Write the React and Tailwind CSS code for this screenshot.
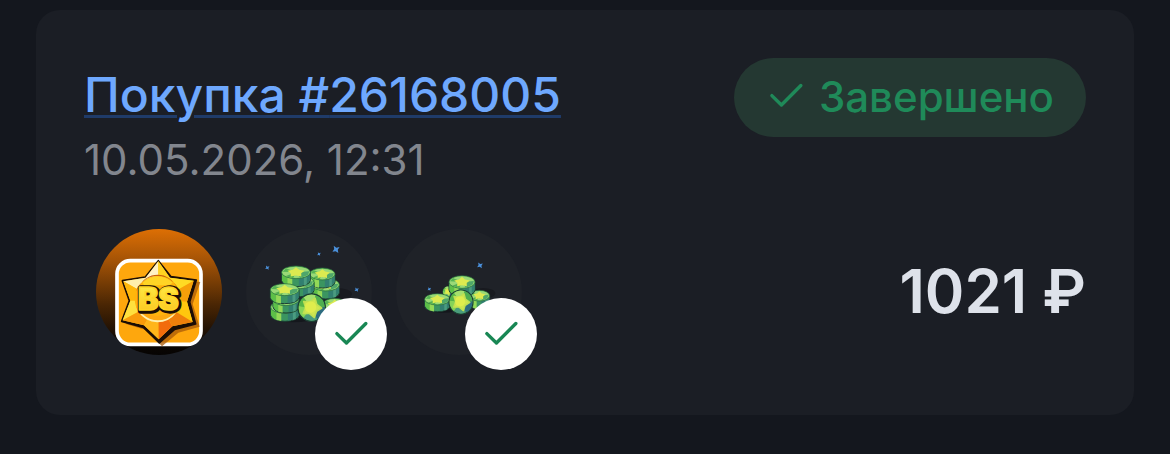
import React from "react";

const order = {
  id: "26168005",
  date: "10.05.2026, 12:31",
  status: "Завершено",
  total: "1021 ₽",
};

const CheckIcon = () => (
  <svg viewBox="0 0 16 16" className="size-[45px]" fill="none" aria-hidden="true">
    <path
      d="M2.8 7.7 6.2 11 13.1 4.1"
      stroke="currentColor"
      strokeWidth="1.2"
      strokeLinecap="round"
      strokeLinejoin="round"
    />
  </svg>
);

const GameLogo = () => (
  <svg viewBox="30 27 378 378" className="size-full" role="img" aria-label="BS">
    <defs>
      <linearGradient id="logoBg" x1="0" y1="0" x2="0" y2="1">
        <stop offset="0" stopColor="#dd6f04" />
        <stop offset="0.25" stopColor="#a45306" />
        <stop offset="0.6" stopColor="#4a2604" />
        <stop offset="0.9" stopColor="#0d0703" />
        <stop offset="1" stopColor="#060403" />
      </linearGradient>
      <linearGradient id="letters" x1="0" y1="0" x2="0" y2="1">
        <stop offset="0" stopColor="#fff04a" />
        <stop offset="1" stopColor="#fbc21c" />
      </linearGradient>
    </defs>
    <circle cx="219" cy="216" r="189" fill="url(#logoBg)" />
    <rect x="93" y="122" width="252" height="251" rx="40" fill="#fea70d" stroke="#fff" strokeWidth="11" />
    <path
      d="M225 134 266 178 343 186 320 252 341 320 277 338 228 379 180 330 120 312Z"
      fill="#a85a08"
      opacity="0.75"
    />
    <path
      d="M217 122 255 170 331 180 311 246 329 312 266 328 220 369 172 322 107 304 130 242 109 182 178 171Z"
      fill="#1b0d05"
      stroke="#1b0d05"
      strokeWidth="5"
      strokeLinejoin="round"
    />
    <path
      d="M217 124 252 173 323 182 303 245 320 306 259 319 218 358 174 316 110 301 133 242 112 184 179 173Z"
      fill="#ffc414"
    />
    <path d="M217 124 179 173 217 243Z" fill="#fff1c4" />
    <path d="M217 124 252 173 217 243Z" fill="#ffd321" />
    <path d="M112 184 179 173 217 243Z" fill="#ffefad" />
    <path d="M112 184 133 242 217 243Z" fill="#ffb70b" />
    <path d="M110 301 133 242 217 243Z" fill="#ffe03e" />
    <path d="M110 301 174 316 217 243Z" fill="#f99b0b" />
    <path d="M323 182 252 173 217 243Z" fill="#ffdb24" />
    <path d="M323 182 303 245 217 243Z" fill="#f7a009" />
    <path d="M320 306 303 245 217 243Z" fill="#ffc60e" />
    <path d="M320 306 259 319 217 243Z" fill="#ef7f0b" />
    <path d="M218 358 174 316 217 243Z" fill="#ffb51a" />
    <path d="M218 358 259 319 217 243Z" fill="#f26c0c" />
    <circle cx="215" cy="237" r="69" fill="#ffb30d" />
    <path d="M150 214A69 69 0 0 1 280 214L272 202A62 62 0 0 0 158 202Z" fill="#c9600b" />
    <path d="M170 188A62 62 0 0 1 260 188L250 196 174 196Z" fill="#ffd425" />
    <path d="M149 256A69 69 0 0 0 279 262L262 279 215 288 164 280Z" fill="#fda812" />
    <path d="M158 277A69 69 0 0 0 270 279L260 284A66 66 0 0 1 172 284Z" fill="#fff0b0" />
    <g
      fontFamily="Inter, sans-serif"
      fontWeight="900"
      fontSize="92"
      textAnchor="middle"
      strokeLinejoin="round"
    >
      <text x="220" y="274" fill="#1b0d05" stroke="#1b0d05" strokeWidth="16" aria-hidden="true">
        BS
      </text>
      <text x="217" y="270" fill="url(#letters)" stroke="#ffd527" strokeWidth="5">
        BS
      </text>
    </g>
  </svg>
);

const starPoints = "0,-0.9 0.32,-0.44 0.86,-0.28 0.52,0.17 0.53,0.75 0,0.56 -0.53,0.75 -0.52,0.17 -0.86,-0.28 -0.32,-0.44";

// coin lying flat, seen from slightly above
const Coin = ({ x, y, rx = 43, ry = 19, h = 24 }) => {
  const side = `M${x - rx} ${y}v${h}a${rx} ${ry} 0 0 0 ${2 * rx} 0v${-h}Z`;
  return (
    <g>
      <path d={side} fill="#3b9560" stroke="#1c4034" strokeWidth="3" strokeLinejoin="round" />
      <path
        d={`M${x - rx + 1} ${y}v${h}q${rx * 0.1} ${ry * 0.55} ${rx * 0.4} ${ry * 0.8}v${-h}Z`}
        fill="#5cbf48"
      />
      <path
        d={`M${x - rx * 0.6} ${y + ry * 0.8}v${h}q${rx * 0.2} 2 ${rx * 0.34} 3v${-h}Z`}
        fill="#93d957"
      />
      <path
        d={`M${x + rx * 0.2} ${y + ry * 0.9}v${h}q${rx * 0.5} ${-ry * 0.1} ${rx * 0.78} ${-ry * 0.9}v${-h}Z`}
        fill="#327f70"
      />
      <path
        d={`M${x + rx * 0.55} ${y + ry * 0.8}v${h}l${rx * 0.2} ${-ry * 0.16}v${-h}Z`}
        fill="#4b9c80"
      />
      <ellipse cx={x} cy={y} rx={rx} ry={ry} fill="#59b94f" stroke="#2c6a42" strokeWidth="2" />
      <ellipse cx={x} cy={y} rx={rx - 2} ry={ry - 2} fill="#9ad977" />
      <path
        d={`M${x} ${y}L${x + rx - 3} ${y - 3}L${x + rx - 7} ${y + 8}L${x + rx * 0.3} ${y + ry - 2}Z`}
        fill="#4fa66a"
      />
      <path d={`M${x} ${y}L${x - rx + 3} ${y - 2}L${x - rx * 0.7} ${y - ry * 0.65}Z`} fill="#55b454" />
      <path
        d={`M${x} ${y}L${x - rx * 0.75} ${y + ry * 0.6}L${x - rx * 0.2} ${y + ry - 2}Z`}
        fill="#52ae52"
      />
      <polygon
        points={starPoints}
        transform={`translate(${x} ${y}) scale(${rx * 0.7} ${ry * 0.9})`}
        fill="#dcea50"
      />
    </g>
  );
};

// coin standing on its edge, facing the viewer
const FrontCoin = ({ x, y, r }) => (
  <g transform={`translate(${x} ${y}) scale(${r})`}>
    <circle r="1" fill="#4aa555" stroke="#1c4034" strokeWidth="0.1" />
    <path d="M0 0 -0.6 -0.74A0.95 0.95 0 0 1 0.3 -0.9Z" fill="#a5e06c" />
    <path d="M0 0 0.3 -0.9A0.95 0.95 0 0 1 0.95 -0.05Z" fill="#4fae4f" />
    <path d="M0 0 0.95 -0.05A0.95 0.95 0 0 1 0.4 0.86Z" fill="#2d6c80" />
    <path d="M0 0 0.4 0.86A0.95 0.95 0 0 1 -0.6 0.74Z" fill="#4a9c7c" />
    <path d="M0 0 -0.6 0.74A0.95 0.95 0 0 1 -0.94 -0.12Z" fill="#86d458" />
    <path d="M0 0 -0.94 -0.12A0.95 0.95 0 0 1 -0.6 -0.74Z" fill="#55b448" />
    <polygon
      points={starPoints}
      transform="rotate(20) scale(0.82)"
      fill="#cfe650"
      stroke="#bfe052"
      strokeWidth="0.14"
      strokeLinejoin="round"
    />
    <circle cx="-0.08" cy="-0.05" r="0.42" fill="#e4ef4c" opacity="0.8" />
  </g>
);

const Sparkle = ({ x, y, r = 10 }) => (
  <path
    transform={`translate(${x} ${y}) rotate(12) scale(${r})`}
    d="M-0.9 -0.9 0 -0.5 0.9 -0.9 0.55 0 0.9 0.9 0 0.55 -0.9 0.9 -0.55 0Z"
    fill="#4b91dc"
  />
);

const BigGemPack = () => (
  <svg viewBox="18 27 378 378" className="size-full" aria-hidden="true">
    <ellipse cx="290" cy="222" rx="46" ry="18" fill="#181a1f" />
    <ellipse cx="160" cy="293" rx="60" ry="14" fill="#14171c" />
    <Sparkle x={288} y={88} />
    <Sparkle x={237} y={102} r={5} />
    <Sparkle x={82} y={143} r={6} />
    <Sparkle x={350} y={209} r={6} />
    <Coin x={257} y={194} rx={41} />
    <Coin x={247} y={162} rx={38} ry={18} />
    <Coin x={181} y={187} rx={41} />
    <Coin x={168} y={157} />
    <Coin x={135} y={261} />
    <Coin x={138} y={238} rx={39} h={22} />
    <Coin x={134} y={209} ry={18} />
    <Coin x={284} y={254} rx={36} />
    <FrontCoin x={215} y={263} r={41} />
  </svg>
);

const SmallGemPack = () => (
  <svg viewBox="18 27 378 378" className="size-full" aria-hidden="true">
    <ellipse cx="280" cy="220" rx="36" ry="16" fill="#181a1f" />
    <ellipse cx="160" cy="265" rx="48" ry="13" fill="#14171c" />
    <Sparkle x={270} y={136} r={8} />
    <Sparkle x={118} y={207} r={5} />
    <FrontCoin x={174} y={215} r={16} />
    <Coin x={268} y={227} rx={31} ry={16} />
    <Coin x={216} y={186} rx={39} />
    <Coin x={142} y={238} rx={38} ry={17} h={20} />
    <FrontCoin x={213} y={246} r={36} />
  </svg>
);

const items = [
  { id: 1, Icon: GameLogo, done: false },
  { id: 2, Icon: BigGemPack, done: true },
  { id: 3, Icon: SmallGemPack, done: true },
];

const App = () => {
  return (
    <div className="min-h-screen bg-[#14171e] px-9 py-2.5 font-['Inter',sans-serif]">
      <div className="rounded-3xl bg-[#1b1e25] p-12">
        <div className="flex items-start justify-between">
          <div>
            <a
              href={`#${order.id}`}
              className="block text-[48px] leading-[74px] font-medium text-[#6ea8fe] underline decoration-[#1f3b69] decoration-3 underline-offset-3"
            >
              Покупка #{order.id}
            </a>
            <p className="text-[42px] leading-[56px] text-[#82868e]">{order.date}</p>
          </div>
          <div className="flex items-center gap-2.5 rounded-full bg-[#243832] pt-[7px] pr-8 pb-[9px] pl-[30px] text-[42px] leading-[63px] font-medium text-[#1f8a59]">
            <CheckIcon />
            <span>{order.status}</span>
          </div>
        </div>

        <div className="mt-[29px] flex items-center justify-between">
          <ul className="flex">
            {items.map(({ id, Icon, done }) => (
              <li key={id} className="relative m-3 size-[126px] rounded-full bg-[#1f2228]">
                <Icon />
                {done && (
                  <span className="absolute -right-[15px] -bottom-[15px] flex size-[72px] items-center justify-center rounded-full bg-white text-[#198754]">
                    <CheckIcon />
                  </span>
                )}
              </li>
            ))}
          </ul>
          <p className="pb-0.5 text-[60px] leading-none font-semibold text-[#dee2ea]">{order.total}</p>
        </div>
      </div>
    </div>
  );
};

export default App;
